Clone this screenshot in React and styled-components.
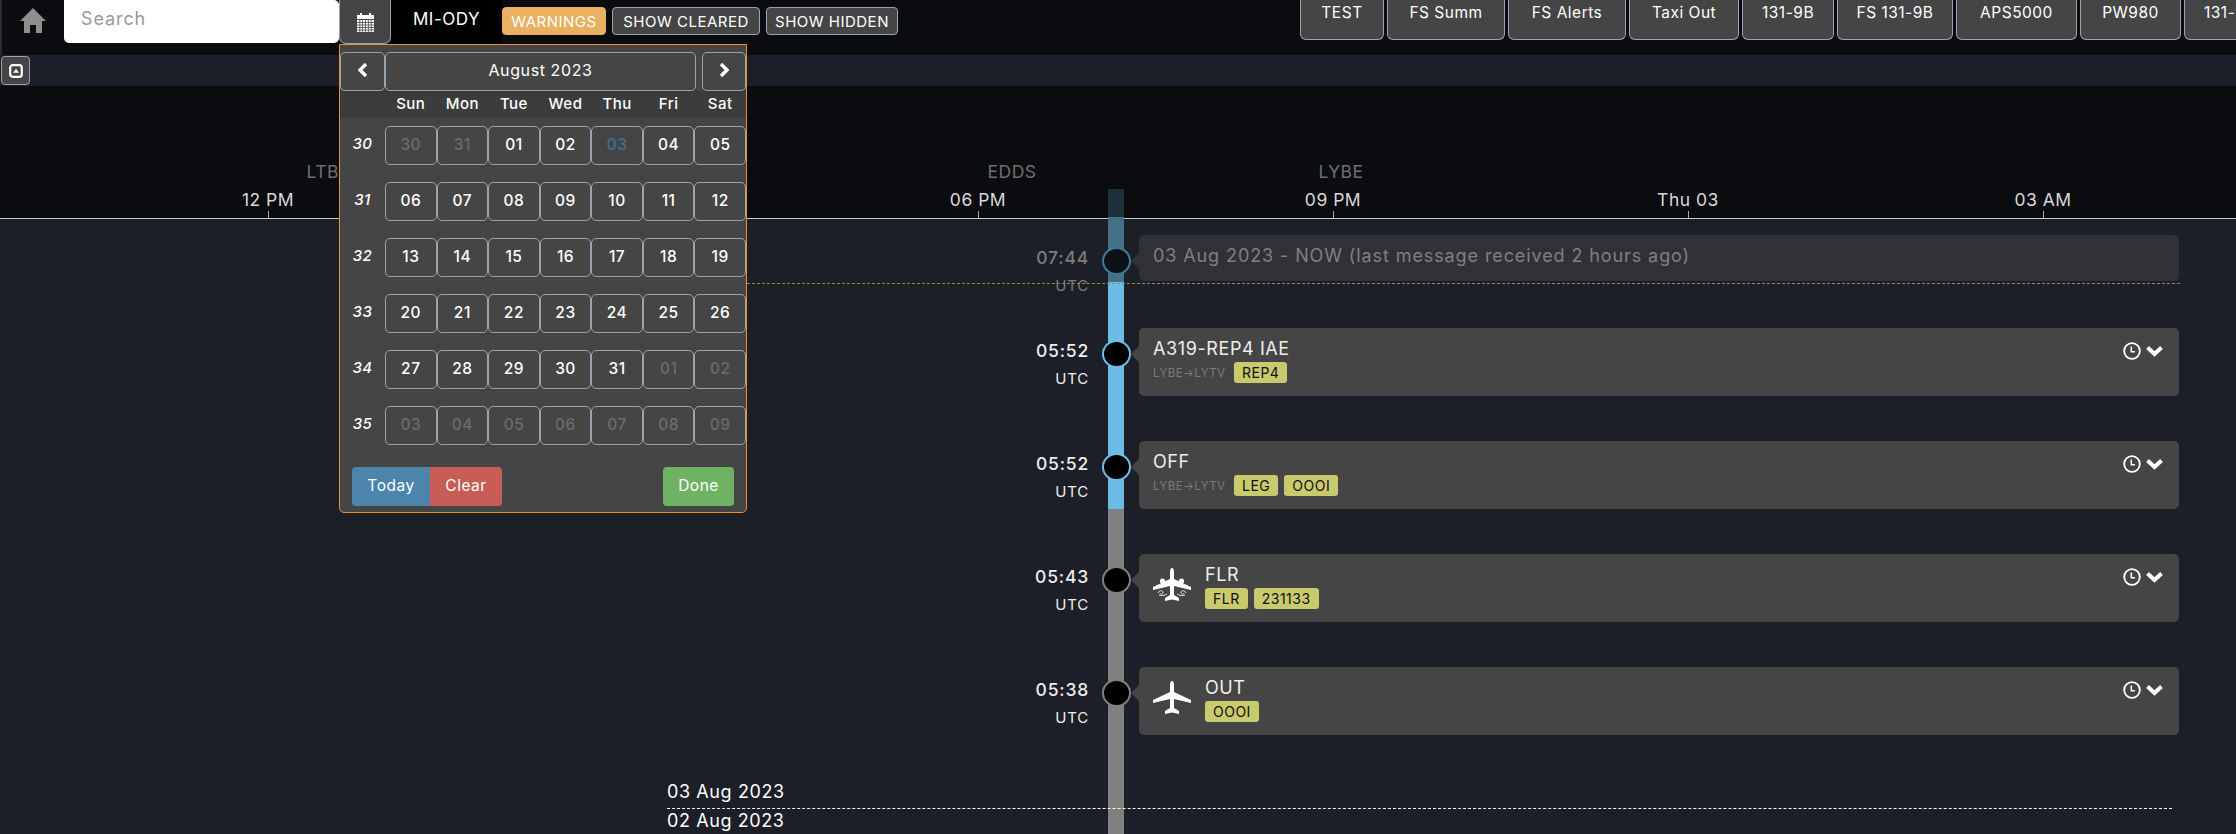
import React from 'react';
import styled, { createGlobalStyle } from 'styled-components';

const GlobalStyle = createGlobalStyle`
    html, body {
        margin:0;
        height:100%;
        background:#1c1f28;
        overflow:hidden;
    }
    * {
        box-sizing:border-box;
    }
`

const tabs = [
    ['TEST', 84], ['FS Summ', 118], ['FS Alerts', 118], ['Taxi Out', 110], ['131-9B', 92],
    ['FS 131-9B', 116], ['APS5000', 121], ['PW980', 101], ['131-9B', 92],
];
const axisTimes = [['12 PM', 268], ['06 PM', 978], ['09 PM', 1333], ['Thu 03', 1688], ['03 AM', 2043]];
const airports = [['LTBJ', 328], ['EDDS', 1012], ['LYBE', 1341]];
const weekDays = ['Sun', 'Mon', 'Tue', 'Wed', 'Thu', 'Fri', 'Sat'];
const weeks = [
    ['30', ['30', '31', '01', '02', '03', '04', '05'], [0, 1]],
    ['31', ['06', '07', '08', '09', '10', '11', '12'], []],
    ['32', ['13', '14', '15', '16', '17', '18', '19'], []],
    ['33', ['20', '21', '22', '23', '24', '25', '26'], []],
    ['34', ['27', '28', '29', '30', '31', '01', '02'], [5, 6]],
    ['35', ['03', '04', '05', '06', '07', '08', '09'], [0, 1, 2, 3, 4, 5, 6]],
];
const events = [
    { time: '05:52', title: 'A319-REP4 IAE', route: true, tags: ['REP4'], node: '#6cbde6' },
    { time: '05:52', title: 'OFF', route: true, tags: ['LEG', 'OOOI'], node: '#6cbde6' },
    { time: '05:43', title: 'FLR', plane: 'flare', tags: ['FLR', '231133'], node: '#808080' },
    { time: '05:38', title: 'OUT', plane: 'plain', tags: ['OOOI'], node: '#808080' },
];

function HomeIcon() {
    return (
        <svg width="26" height="25" viewBox="0 0 26 25">
            <path fill="#8f8f8f" d="M13 0 L26 13 L22 13 L22 25 L16 25 L16 17 L10 17 L10 25 L4 25 L4 13 L0 13 Z" />
        </svg>
    )
}

function CalendarIcon() {
    return (
        <svg width="17" height="20" viewBox="0 0 17 20">
            <path fill="#fff" d="M0 3 H3 V1 H5 V3 H12 V1 H14 V3 H17 V7 H0 Z" />
            <rect y="8" width="17" height="12" fill="#fff" />
            <path stroke="#454545" strokeWidth=".8" d="M2.8 8 V20 M5.6 8 V20 M8.5 8 V20 M11.4 8 V20 M14.2 8 V20 M0 10.5 H17 M0 13 H17 M0 15.5 H17 M0 18 H17" />
        </svg>
    )
}

function ClockIcon() {
    return (
        <svg width="18" height="18" viewBox="0 0 18 18" fill="none" stroke="#fff">
            <circle cx="9" cy="9" r="7.8" strokeWidth="1.8" />
            <path d="M8.3 4.6 V9.7 H12" strokeWidth="1.5" />
        </svg>
    )
}

function ChevronDown() {
    return (
        <svg width="17" height="12" viewBox="0 0 17 12" fill="none" stroke="#fff" strokeWidth="4">
            <path d="M1.5 2.5 L8.5 9 L15.5 2.5" />
        </svg>
    )
}

function ChevronSide({ right }) {
    return (
        <svg width="10" height="14" viewBox="0 0 10 14" fill="none" stroke="#fff" strokeWidth="3.4">
            <path d={right ? 'M2 1 L8 7 L2 13' : 'M8 1 L2 7 L8 13'} />
        </svg>
    )
}

function PlaneIcon({ flare }) {
    return (
        <svg width="38" height="33" viewBox="0 0 38 33">
            <path fill="#fff" d="M19 0 C20.4 0 21 2 21 4 L21 11 L38 19 L38 22 L21 18 L21 27 L26 30 L26 33 L19 31.5 L12 33 L12 30 L17 27 L17 18 L0 22 L0 19 L17 11 L17 4 C17 2 17.6 0 19 0 Z" />
            {flare && (
                <g>
                    <circle cx="9.5" cy="13" r="2.6" fill="#fff" />
                    <circle cx="28.5" cy="13" r="2.6" fill="#fff" />
                    <path fill="none" stroke="#ddd" strokeWidth="1" d="M5 25 C6 22 10 22 10 25 C10 27 7 27 7 25 M14 26 C11 28 8 28 6 27 M33 25 C32 22 28 22 28 25 C28 27 31 27 31 25 M24 26 C27 28 30 28 32 27" />
                </g>
            )}
        </svg>
    )
}

function DatePicker() {
    return (
        <Popup>
            <PickerNav>
                <NavButton $w={45}><ChevronSide /></NavButton>
                <NavButton $w={311}>August 2023</NavButton>
                <NavButton $w={44} $gap={6}><ChevronSide right /></NavButton>
            </PickerNav>
            <DayHeads>
                <span />
                {weekDays.map((d) => <DayHead key={d}>{d}</DayHead>)}
            </DayHeads>
            <DayGrid>
                {weeks.map(([week, days, muted]) => (
                    <React.Fragment key={week}>
                        <WeekNo>{week}</WeekNo>
                        {days.map((d, i) => (
                            <DayCell key={i} $muted={muted.includes(i)} $today={week === '30' && d === '03'}>{d}</DayCell>
                        ))}
                    </React.Fragment>
                ))}
            </DayGrid>
            <PickerFoot>
                <FootButton $bg="#4d84ab" $w={78} $left>Today</FootButton>
                <FootButton $bg="#c85c56" $w={72} $right>Clear</FootButton>
                <FootButton $bg="#6fb263" $w={71} $push>Done</FootButton>
            </PickerFoot>
        </Popup>
    )
}

function App() {
    return (
        <Page>
            <GlobalStyle />
            <TopBar>
                <LeftTools>
                    <HomeLink><HomeIcon /></HomeLink>
                    <SearchInput placeholder="Search" />
                    <CalendarButton><CalendarIcon /></CalendarButton>
                    <TailLabel>MI-ODY</TailLabel>
                    <FilterButton $active $w={104}>WARNINGS</FilterButton>
                    <FilterButton $w={148}>SHOW CLEARED</FilterButton>
                    <FilterButton $w={132}>SHOW HIDDEN</FilterButton>
                </LeftTools>
                <Tabs>
                    {tabs.map(([label, w], i) => <Tab key={i} $w={w}>{label}</Tab>)}
                </Tabs>
            </TopBar>
            <SubBar>
                <CollapseButton>
                    <svg width="14" height="14" viewBox="0 0 14 14">
                        <rect x="1.2" y="1.2" width="11.6" height="11.6" rx="2.5" fill="none" stroke="#fff" strokeWidth="2.2" />
                        <path fill="#fff" d="M7 4.8 L10 8.8 H4 Z" />
                    </svg>
                </CollapseButton>
            </SubBar>
            <Axis>
                {airports.map(([name, x]) => <AirportMark key={name} $x={x}>{name}</AirportMark>)}
                {axisTimes.map(([label, x]) => (
                    <React.Fragment key={label}>
                        <TimeMark $x={x}>{label}</TimeMark>
                        <Tick $x={x} />
                    </React.Fragment>
                ))}
            </Axis>
            <Rail>
                <RailPart $h={28} $c="#1a2f3a" />
                <RailPart $h={65} $c="#46708a" />
                <RailPart $h={227} $c="#6cbde6" />
                <RailPart $grow $c="#808080" />
            </Rail>
            <Feed>
                <NowLine />
                <Row $h={48}>
                    <TimeCol $dim>
                        <TimeText>07:44</TimeText>
                        <UtcText>UTC</UtcText>
                    </TimeCol>
                    <Node $c="#3f7a9c" $bg="#0e1118" />
                    <Card $dim $h={46}>
                        <CardBody>
                            <CardTitle $now>03 Aug 2023 - NOW (last message received 2 hours ago)</CardTitle>
                        </CardBody>
                    </Card>
                </Row>
                {events.map((ev, i) => (
                    <Row key={i} $h={68}>
                        <TimeCol>
                            <TimeText>{ev.time}</TimeText>
                            <UtcText>UTC</UtcText>
                        </TimeCol>
                        <Node $c={ev.node} $bg="#000" />
                        <Card $h={68}>
                            {ev.plane && <PlaneBox><PlaneIcon flare={ev.plane === 'flare'} /></PlaneBox>}
                            <CardBody>
                                <CardTitle>{ev.title}</CardTitle>
                                <TagRow>
                                    {ev.route && <Route>LYBE→LYTV</Route>}
                                    {ev.tags.map((t) => <Tag key={t}>{t}</Tag>)}
                                </TagRow>
                            </CardBody>
                            <CardActions>
                                <ClockIcon />
                                <ChevronDown />
                            </CardActions>
                        </Card>
                    </Row>
                ))}
                <DateBreak>03 Aug 2023</DateBreak>
                <DateLabel>02 Aug 2023</DateLabel>
            </Feed>
            <DatePicker />
        </Page>
    )
}
export default App;

const Page = styled.div`
    position:relative;
    width:2236px;
    height:834px;
    overflow:hidden;
    background:#1c1f28;
    color:#fff;
    font-family:Inter, "Liberation Sans", sans-serif;
    letter-spacing:.5px;
`
const TopBar = styled.div`
    display:flex;
    height:55px;
    background:#0a0c10;
    overflow:hidden;
    border-left:2px solid #2a2c30;
`
const LeftTools = styled.div`
    display:flex;
    align-items:flex-start;
    flex:0 0 1298px;
`
const HomeLink = styled.div`
    width:62px;
    padding:8px 0 0 18px;
`
const SearchInput = styled.input`
    width:275px;
    height:43px;
    padding:0 0 7px 17px;
    border:none;
    outline:none;
    border-radius:0 5px 5px 5px;
    background:#fff;
    font-family:inherit;
    font-size:18px;
    letter-spacing:.9px;
    &::placeholder {
        color:#999;
    }
`
const CalendarButton = styled.div`
    width:52px;
    height:44px;
    display:flex;
    align-items:center;
    justify-content:center;
    background:#454545;
    border:1px solid #9aa3b0;
    border-top:none;
    border-radius:0 0 7px 7px;
`
const TailLabel = styled.div`
    width:111px;
    height:44px;
    padding-top:7px;
    background:#000;
    text-align:center;
    font-size:17px;
    line-height:24px;
`
const FilterButton = styled.div`
    width:${(p) => p.$w}px;
    height:28px;
    margin:7px 6px 0 0;
    display:flex;
    align-items:center;
    justify-content:center;
    font-size:15px;
    white-space:nowrap;
    border-radius:4px;
    border:1px solid ${(p) => (p.$active ? '#e8b060' : '#9aa3b0')};
    background:${(p) => (p.$active ? '#e8b060' : '#454545')};
`
const Tabs = styled.div`
    display:flex;
    gap:3px;
    flex-shrink:0;
`
const Tab = styled.div`
    width:${(p) => p.$w}px;
    height:40px;
    flex-shrink:0;
    padding-top:1px;
    text-align:center;
    font-size:15.5px;
    line-height:24px;
    background:#454545;
    border:1px solid #9aa3b0;
    border-top:none;
    border-radius:0 0 6px 6px;
`
const SubBar = styled.div`
    height:30px;
    padding-left:1px;
    background:#1c1f28;
`
const CollapseButton = styled.div`
    width:29px;
    height:29px;
    margin-top:1px;
    display:flex;
    align-items:center;
    justify-content:center;
    background:#454545;
    border:1px solid #9aa3b0;
    border-radius:4px;
`
const Axis = styled.div`
    position:relative;
    height:133px;
    background:#0a0c10;
    border-bottom:1px solid #c3d5b0;
`
const AirportMark = styled.div`
    position:absolute;
    left:${(p) => p.$x}px;
    top:76px;
    transform:translateX(-50%);
    font-size:17.5px;
    line-height:20px;
    color:#6f6f6f;
`
const TimeMark = styled.div`
    position:absolute;
    left:${(p) => p.$x}px;
    top:104px;
    transform:translateX(-50%);
    font-size:17.5px;
    line-height:20px;
    color:#d8d8d8;
    white-space:nowrap;
`
const Tick = styled.div`
    position:absolute;
    left:${(p) => p.$x}px;
    bottom:0;
    width:1px;
    height:7px;
    background:#aaa;
`
const Rail = styled.div`
    position:absolute;
    left:1108px;
    top:189px;
    bottom:0;
    width:16px;
    display:flex;
    flex-direction:column;
`
const RailPart = styled.div`
    height:${(p) => (p.$h ? `${p.$h}px` : 'auto')};
    flex-grow:${(p) => (p.$grow ? 1 : 0)};
    background:${(p) => p.$c};
`
const Feed = styled.div`
    position:relative;
    padding-top:16px;
    display:flex;
    flex-direction:column;
    gap:45px;
`
const NowLine = styled.div`
    position:absolute;
    left:667px;
    top:64px;
    width:1513px;
    border-top:1px dashed #8f8f35;
`
const Row = styled.div`
    display:grid;
    grid-template-columns:1089px 50px 1040px;
    align-items:start;
    height:${(p) => p.$h}px;
`
const TimeCol = styled.div`
    padding-top:11px;
    text-align:right;
    letter-spacing:.8px;
    color:${(p) => (p.$dim ? '#7d7d7d' : '#ededed')};
`
const TimeText = styled.div`
    font-size:17.5px;
    line-height:24px;
    font-weight:500;
`
const UtcText = styled.div`
    margin-top:4px;
    font-size:15px;
    line-height:24px;
`
const Node = styled.div`
    position:relative;
    width:29px;
    height:28px;
    margin:12px 0 0 13px;
    border-radius:50%;
    background:${(p) => p.$bg};
    border:2px solid ${(p) => p.$c};
`
const Card = styled.div`
    position:relative;
    display:flex;
    align-items:flex-start;
    height:${(p) => p.$h}px;
    padding:0 16px 0 14px;
    background:${(p) => (p.$dim ? '#303136' : '#454545')};
    border-radius:5px;
    &::before {
        content:"";
        position:absolute;
        left:-8px;
        top:18px;
        border-style:solid;
        border-width:8px 8px 8px 0;
        border-color:transparent ${(p) => (p.$dim ? '#303136' : '#454545')} transparent transparent;
    }
`
const PlaneBox = styled.div`
    width:38px;
    height:33px;
    margin:14px 14px 0 0;
`
const CardBody = styled.div`
    padding-top:9px;
`
const CardTitle = styled.div`
    font-size:18px;
    line-height:24px;
    letter-spacing:${(p) => (p.$now ? '.9px' : '.6px')};
    color:${(p) => (p.$now ? '#808080' : '#eeeeee')};
`
const TagRow = styled.div`
    display:flex;
    align-items:center;
    gap:6px;
    margin-top:1px;
`
const Route = styled.span`
    width:75px;
    font-size:11.5px;
    letter-spacing:.4px;
    color:#7a7a7a;
    white-space:nowrap;
`
const Tag = styled.span`
    height:21px;
    padding:0 8px;
    display:flex;
    align-items:center;
    border-radius:3px;
    background:#c9c96e;
    color:#111;
    font-size:14px;
    white-space:nowrap;
`
const CardActions = styled.div`
    margin:14px 0 0 auto;
    display:flex;
    align-items:center;
    gap:5px;
`
const DateBreak = styled.div`
    margin:0 0 0 667px;
    width:1505px;
    height:29px;
    border-bottom:1px dashed #fff;
    font-size:18px;
    line-height:24px;
    letter-spacing:.6px;
`
const DateLabel = styled.div`
    margin:-45px 0 0 667px;
    font-size:18px;
    line-height:23px;
    letter-spacing:.6px;
`
const Popup = styled.div`
    position:absolute;
    left:339px;
    top:44px;
    width:408px;
    height:469px;
    background:#454545;
    border:1px solid #e8912d;
    border-radius:0 0 5px 5px;
`
const PickerNav = styled.div`
    display:flex;
    padding-top:7px;
    height:46px;
`
const NavButton = styled.div`
    width:${(p) => p.$w}px;
    margin-left:${(p) => p.$gap || 0}px;
    height:39px;
    padding-bottom:3px;
    display:flex;
    align-items:center;
    justify-content:center;
    font-size:16px;
    letter-spacing:.6px;
    border:1px solid #9aa3b0;
    border-radius:5px;
`
const DayHeads = styled.div`
    display:grid;
    grid-template-columns:45px repeat(7, 1fr);
    height:27px;
    padding-bottom:2px;
    align-items:center;
    background:#3c3c3c;
`
const DayHead = styled.div`
    text-align:center;
    font-size:15px;
    font-weight:500;
`
const DayGrid = styled.div`
    display:grid;
    grid-template-columns:45px repeat(7, 1fr);
    grid-auto-rows:39px;
    row-gap:17px;
    padding-top:8px;
`
const WeekNo = styled.div`
    display:flex;
    align-items:center;
    justify-content:center;
    padding:0 0 4px 0;
    font-style:italic;
    font-weight:500;
    font-size:15px;
`
const DayCell = styled.div`
    display:flex;
    align-items:center;
    justify-content:center;
    padding-bottom:2px;
    font-size:15.5px;
    font-weight:500;
    border:1px solid #9aa3b0;
    border-radius:5px;
    color:${(p) => (p.$today ? '#3f7199' : p.$muted ? '#6c6c6c' : '#fff')};
`
const PickerFoot = styled.div`
    display:flex;
    padding:22px 12px 0 12px;
`
const FootButton = styled.div`
    width:${(p) => p.$w}px;
    height:39px;
    padding-bottom:2px;
    display:flex;
    align-items:center;
    justify-content:center;
    margin-left:${(p) => (p.$push ? 'auto' : 0)};
    background:${(p) => p.$bg};
    font-size:15.5px;
    border-radius:${(p) => (p.$left ? '4px 0 0 4px' : p.$right ? '0 4px 4px 0' : '4px')};
`
